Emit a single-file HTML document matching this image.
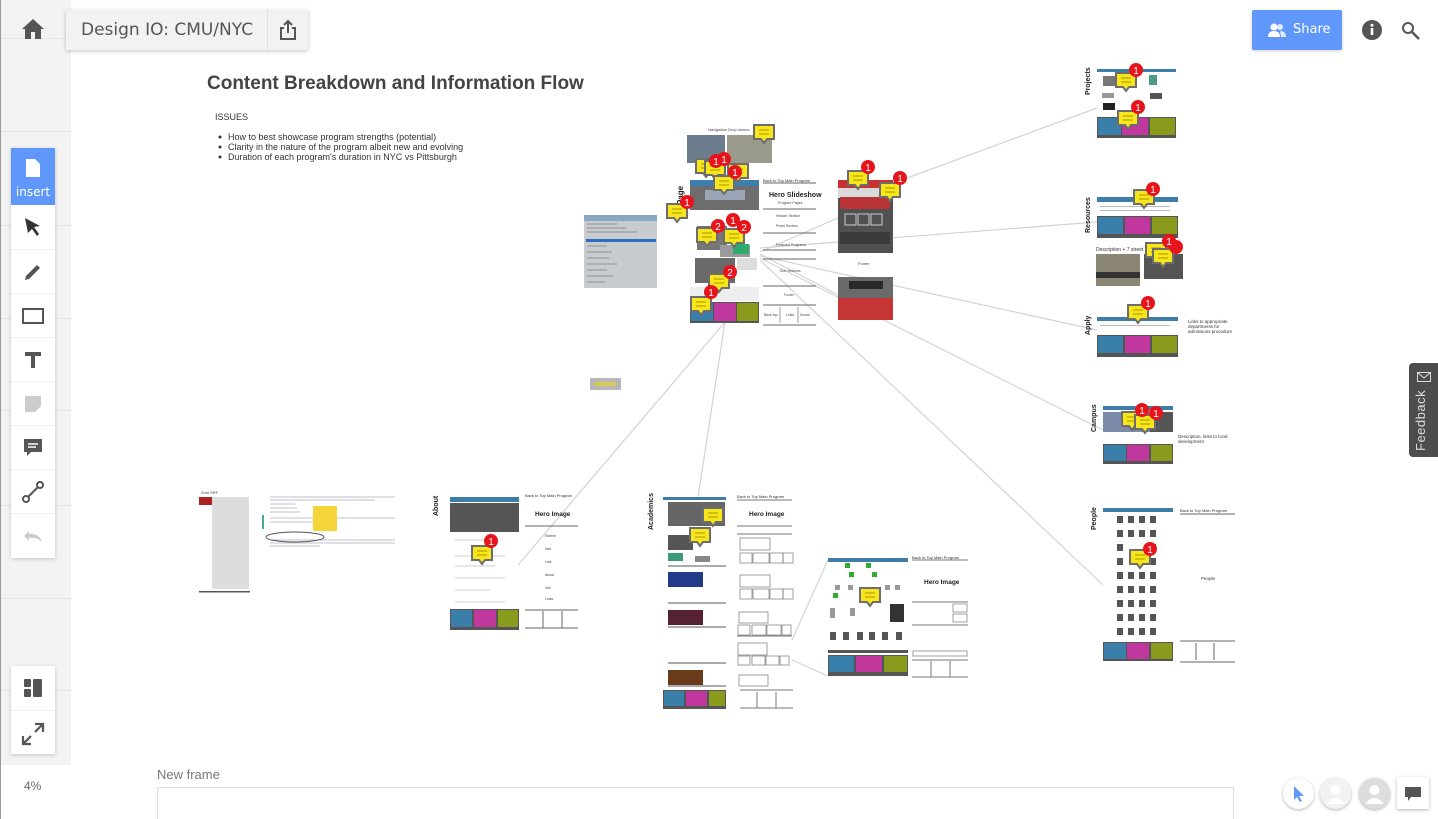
<!DOCTYPE html>
<html><head><meta charset="utf-8">
<style>
*{margin:0;padding:0;box-sizing:border-box}
body{width:1438px;height:819px;overflow:hidden;background:#fff;font-family:"Liberation Sans",sans-serif;position:relative}
.strip{position:absolute;left:0;top:0;width:71px;height:765px;background:#f3f3f3;border-left:1px solid #999}
.strip i{position:absolute;left:0;width:71px;height:1px;background:#e4e4e4}
.topbtn{position:absolute;left:66px;top:10px;width:242px;height:40px;background:#f2f2f2;box-shadow:0 1px 4px rgba(0,0,0,.25);border-radius:2px}
.topbtn span{position:absolute;left:15px;top:10px;color:#555;font-family:"DejaVu Sans","Liberation Sans",sans-serif;font-size:17px}
.topbtn b{position:absolute;left:201px;top:0;width:1px;height:40px;background:#ddd}
.tools{position:absolute;left:11px;top:148px;width:44px;height:410px;background:#fff;box-shadow:0 1px 4px rgba(0,0,0,.2)}
.ins{position:absolute;left:0;top:0;width:44px;height:57px;background:#5f97fb;color:#fff;font-size:13px;text-align:center}
.tool{position:absolute;left:0;width:44px;height:44px;display:flex;align-items:center;justify-content:center;border-top:1px solid #eee}
.share{position:absolute;left:1252px;top:10px;width:90px;height:40px;background:#5f97fb;border-radius:2px;color:#fff;font-size:14px;box-shadow:0 1px 3px rgba(0,0,0,.2)}
.fb{position:absolute;left:1409px;top:363px;width:29px;height:94px;background:#4d4d4d;border-radius:4px 0 0 4px}
.fb span{position:absolute;left:4px;top:88px;transform:rotate(-90deg);transform-origin:0 0;color:#ddd;font-size:13px;white-space:nowrap;letter-spacing:.5px}
.circ{position:absolute;top:778px;width:31px;height:31px;border-radius:50%;background:#fff;box-shadow:0 1px 3px rgba(0,0,0,.3)}
</style></head><body>
<div class="strip"><i style="top:38px"></i><i style="top:131px"></i><i style="top:225px"></i><i style="top:318px"></i><i style="top:410px"></i><i style="top:505px"></i><i style="top:598px"></i><i style="top:690px"></i></div>
<div style="position:absolute;left:0;top:765px;width:71px;height:54px;background:#fff;border-left:1px solid #999"></div>
<svg style="position:absolute;left:21px;top:18px" width="24" height="22" viewBox="0 0 24 22"><path d="M12 1 L1 11 H4 V21 H10 V14 H14 V21 H20 V11 H23 Z" fill="#555"/></svg>
<div class="topbtn"><span>Design IO: CMU/NYC</span><b></b>
<svg style="position:absolute;left:212px;top:9px" width="20" height="22" viewBox="0 0 20 22"><path d="M10 2 V14 M6 6 L10 2 L14 6 M6 9 H3 V20 H17 V9 H14" stroke="#555" stroke-width="2" fill="none"/></svg></div>

<div class="tools">
<div class="ins"><svg style="position:absolute;left:15px;top:11px" width="14" height="18" viewBox="0 0 14 18"><path d="M0 0 H9 L14 5 V18 H0 Z" fill="#fff"/></svg><div style="position:absolute;top:37px;width:44px;font-family:'DejaVu Sans',sans-serif;font-size:12px">insert</div></div>
<div class="tool" style="top:57px;border:none"><svg width="20" height="20" viewBox="0 0 20 20"><path d="M2 1 L17 9 L11 10 L16 17 L14 19 L9 12 L5 16 Z" fill="#333"/></svg></div>
<div class="tool" style="top:101px"><svg width="20" height="20" viewBox="0 0 20 20"><path d="M2 18 L3 14 L14 3 L17 6 L6 17 Z" fill="#555"/></svg></div>
<div class="tool" style="top:145px"><svg width="22" height="16"><rect x="1" y="1" width="20" height="14" fill="none" stroke="#555" stroke-width="2"/></svg></div>
<div class="tool" style="top:189px"><svg width="18" height="18"><path d="M1 1 H17 V5 H11 V17 H7 V5 H1Z" fill="#555"/></svg></div>
<div class="tool" style="top:233px"><svg width="18" height="18"><path d="M1 1 H17 V11 L11 17 H1Z" fill="#ccc"/></svg></div>
<div class="tool" style="top:277px"><svg width="20" height="20"><path d="M1 1 H19 V14 H8 L4 18 V14 H1Z" fill="#555"/><path d="M5 6 H15 M5 9 H13" stroke="#fff" stroke-width="1.5"/></svg></div>
<div class="tool" style="top:321px"><svg width="22" height="22"><circle cx="4" cy="18" r="3" fill="none" stroke="#555" stroke-width="2"/><circle cx="18" cy="4" r="3" fill="none" stroke="#555" stroke-width="2"/><path d="M6 16 L16 6" stroke="#555" stroke-width="2"/></svg></div>
<div class="tool" style="top:365px"><svg width="22" height="16"><path d="M2 8 L7 3 V6 Q17 5 20 14 Q15 9 7 10 V13Z" fill="#ccc"/></svg></div>
</div>

<div style="position:absolute;left:11px;top:666px;width:44px;height:88px;background:#fff;box-shadow:0 1px 4px rgba(0,0,0,.2)">
<svg style="position:absolute;left:13px;top:13px" width="18" height="18"><rect x="0" y="0" width="7" height="8" rx="1" fill="#555"/><rect x="0" y="10" width="7" height="8" rx="1" fill="#555"/><rect x="9" y="0" width="9" height="18" rx="1" fill="#555"/></svg>
<div style="position:absolute;left:0;top:44px;width:44px;height:1px;background:#eee"></div>
<svg style="position:absolute;left:10px;top:56px" width="24" height="24"><path d="M14 2 H22 V10 M22 2 L14 10 M10 22 H2 V14 M2 22 L10 14" stroke="#555" stroke-width="2.2" fill="none"/></svg>
</div>
<div style="position:absolute;left:24px;top:779px;font-size:12px;color:#666">4%</div>

<div class="share"><svg style="position:absolute;left:16px;top:13px" width="18" height="14"><circle cx="6" cy="4" r="3.5" fill="#fff"/><path d="M0 14 Q0 8 6 8 Q12 8 12 14Z" fill="#fff"/><circle cx="12" cy="4" r="3" fill="#fff" opacity=".8"/><path d="M12 8 Q18 8 18 14 H13" fill="#fff" opacity=".8"/></svg><span style="position:absolute;left:41px;top:12px;font-family:'DejaVu Sans',sans-serif;font-size:13px">Share</span></div>
<svg style="position:absolute;left:1362px;top:20px" width="20" height="20"><circle cx="10" cy="10" r="10" fill="#555"/><rect x="8.7" y="8" width="2.6" height="7" fill="#fff"/><circle cx="10" cy="5.3" r="1.5" fill="#fff"/></svg>
<svg style="position:absolute;left:1401px;top:21px" width="20" height="20"><circle cx="7" cy="7" r="5" fill="none" stroke="#555" stroke-width="2"/><path d="M11 11 L18 18" stroke="#555" stroke-width="2.5"/></svg>

<div class="fb"><svg style="position:absolute;left:8px;top:9px" width="14" height="10"><rect x=".5" y=".5" width="13" height="9" fill="none" stroke="#ddd"/><path d="M.5 .5 L7 6 L13.5 .5" fill="none" stroke="#ddd"/></svg><span>Feedback</span></div>

<svg style="position:absolute;left:0;top:0" width="1438" height="819">
<defs>
<g id="nt"><path d="M1 1 H21 V15 H14 L11 19 L8 15 H1Z" fill="#f7e61c" stroke="#6d6d6d" stroke-width="2"/><path d="M6 6 H16 M6 10 H16" stroke="#b9a800" stroke-width="1.3"/></g>
</defs>
<g font-family="Liberation Sans,sans-serif">
<text x="207" y="89" font-size="19" font-weight="bold" fill="#444">Content Breakdown and Information Flow</text>
<text x="215" y="120" font-size="9" fill="#333">ISSUES</text>
<g font-size="9" fill="#333"><circle cx="220" cy="137" r="1.5"/><text x="228" y="140">How to best showcase program strengths (potential)</text>
<circle cx="220" cy="147" r="1.5"/><text x="228" y="150">Clarity in the nature of the program albeit new and evolving</text>
<circle cx="220" cy="157" r="1.5"/><text x="228" y="160">Duration of each program's duration in NYC vs Pittsburgh</text></g>

<g stroke="#d3d3d3" stroke-width="1.2" fill="none">
<path d="M760 252 L838 218"/><path d="M880 188 L1097 108"/><path d="M760 248 L1097 222"/><path d="M760 256 L1097 330"/><path d="M760 258 L1103 430"/><path d="M760 260 L1103 585"/><path d="M725 322 L518 565"/><path d="M725 322 L698 497"/><path d="M760 254 L838 295"/><path d="M792 640 L828 560"/><path d="M792 660 L828 676"/>
</g>

<rect x="584" y="215" width="73" height="73" fill="#c9cccf"/>
<rect x="584" y="215" width="73" height="6" fill="#8aa7c2"/><rect x="586" y="239" width="70" height="3" fill="#2b6fc5"/>
<g stroke="#555" stroke-width=".6"><path d="M587 224h30M587 228h40M587 232h50M587 246h20M587 252h25M587 258h22M587 264h30M587 270h20M587 276h26M587 282h18"/></g>
<rect x="590" y="378" width="31" height="12" fill="#b8b8b8"/><rect x="594" y="382" width="22" height="4" fill="#d8c85a"/>

<text x="708" y="131" font-size="4" fill="#444">Navigation Drop downs</text>
<rect x="687" y="135" width="38" height="28" fill="#6b7d8c"/><rect x="727" y="135" width="45" height="28" fill="#9a9a8c"/>
<rect x="690" y="180" width="69" height="30" fill="#6d6d6d"/><rect x="690" y="180" width="69" height="6" fill="#3c7fae"/><rect x="705" y="190" width="40" height="10" fill="#9aa5b8"/>
<text x="683" y="205" font-size="8" font-weight="bold" fill="#222" transform="rotate(-90 683 205)">Page</text>
<rect x="697" y="226" width="30" height="24" fill="#777"/><rect x="720" y="245" width="30" height="12" fill="#9a9a9a"/><rect x="733" y="244" width="16" height="10" fill="#2eaa70"/>
<rect x="695" y="258" width="40" height="25" fill="#6a6a6a"/><rect x="737" y="258" width="20" height="12" fill="#ddd"/>
<rect x="690" y="287" width="69" height="14" fill="#eee"/>
<rect x="690" y="302" width="69" height="21" fill="#555"/><rect x="691" y="303" width="22" height="18" fill="#3a7eaa"/><rect x="714" y="303" width="22" height="18" fill="#c0389e"/><rect x="737" y="303" width="21" height="18" fill="#8a9a1d"/>
<g stroke="#666" stroke-width="1"><path d="M763 183h53M763 209h53M763 233h53M763 250h53M763 259h53M763 286h53M763 305h53M763 325h53"/></g>
<text x="763" y="182" font-size="4" fill="#333">Back to Top     Main Program</text>
<text x="769" y="197" font-size="7" font-weight="bold" fill="#222">Hero Slideshow</text>
<g font-size="3.5" fill="#444"><text x="778" y="204">Program Pages</text><text x="776" y="217">Header Section</text><text x="776" y="227">Press Section</text><text x="776" y="246">Featured Programs</text><text x="780" y="272">Sub Sections</text><text x="784" y="296">Footer</text><text x="764" y="316">Back top</text><text x="786" y="316">Links</text><text x="800" y="316">Social</text></g>
<g stroke="#999"><path d="M780 307v16M798 307v16"/></g>

<rect x="838" y="180" width="55" height="73" fill="#505050"/><rect x="838" y="180" width="55" height="8" fill="#c93030"/><rect x="838" y="188" width="55" height="10" fill="#d9d9d9"/><rect x="840" y="197" width="50" height="12" fill="#b83333"/>
<g fill="none" stroke="#ccc"><rect x="845" y="214" width="11" height="11"/><rect x="858" y="214" width="11" height="11"/><rect x="871" y="214" width="11" height="11"/></g>
<rect x="840" y="232" width="50" height="12" fill="#3a3a3a"/>
<text x="858" y="265" font-size="4" fill="#444">Footer</text>
<rect x="838" y="277" width="55" height="43" fill="#6a6a6a"/><rect x="849" y="281" width="34" height="8" fill="#2a2a2a"/><rect x="838" y="298" width="55" height="22" fill="#c63535"/>

<text x="1090" y="95" font-size="7" font-weight="bold" fill="#222" transform="rotate(-90 1090 95)">Projects</text>
<rect x="1097" y="69" width="79" height="3" fill="#3d7ea8"/>
<rect x="1103" y="76" width="14" height="10" fill="#777"/><rect x="1149" y="75" width="8" height="10" fill="#4a9a8a"/><rect x="1150" y="93" width="12" height="6" fill="#555"/><rect x="1103" y="103" width="12" height="7" fill="#222"/><rect x="1102" y="93" width="12" height="5" fill="#999"/>
<rect x="1097" y="117" width="79" height="21" fill="#555"/><rect x="1098" y="118" width="23" height="17" fill="#3a7eaa"/><rect x="1122" y="118" width="26" height="17" fill="#c0389e"/><rect x="1150" y="118" width="25" height="17" fill="#8a9a1d"/>

<text x="1090" y="233" font-size="7" font-weight="bold" fill="#222" transform="rotate(-90 1090 233)">Resources</text>
<rect x="1097" y="197" width="81" height="5" fill="#3d7ea8"/><rect x="1100" y="206" width="70" height="1" fill="#bbb"/><rect x="1100" y="210" width="70" height="1" fill="#bbb"/>
<rect x="1097" y="216" width="81" height="22" fill="#555"/><rect x="1098" y="217" width="25" height="17" fill="#3a7eaa"/><rect x="1125" y="217" width="25" height="17" fill="#c0389e"/><rect x="1152" y="217" width="25" height="17" fill="#8a9a1d"/>
<text x="1096" y="251" font-size="5" fill="#333">Description + 7 street list</text>
<rect x="1096" y="254" width="44" height="32" fill="#8b8574"/><rect x="1096" y="272" width="44" height="6" fill="#333"/><rect x="1144" y="254" width="39" height="25" fill="#555"/>

<text x="1090" y="335" font-size="7" font-weight="bold" fill="#222" transform="rotate(-90 1090 335)">Apply</text>
<rect x="1097" y="317" width="81" height="4" fill="#3d7ea8"/><rect x="1100" y="325" width="70" height="1" fill="#bbb"/>
<rect x="1097" y="335" width="81" height="22" fill="#555"/><rect x="1098" y="336" width="25" height="17" fill="#3a7eaa"/><rect x="1125" y="336" width="25" height="17" fill="#c0389e"/><rect x="1152" y="336" width="25" height="17" fill="#8a9a1d"/>
<g font-size="4.5" fill="#333"><text x="1188" y="323">Links to appropriate</text><text x="1188" y="328">departments for</text><text x="1188" y="333">admissions procedure</text></g>

<text x="1096" y="432" font-size="7" font-weight="bold" fill="#222" transform="rotate(-90 1096 432)">Campus</text>
<rect x="1103" y="406" width="70" height="4" fill="#3d7ea8"/><rect x="1103" y="412" width="70" height="20" fill="#7a8aa8"/><rect x="1150" y="412" width="23" height="20" fill="#555"/>
<rect x="1103" y="444" width="70" height="20" fill="#555"/><rect x="1104" y="445" width="22" height="16" fill="#3a7eaa"/><rect x="1127" y="445" width="22" height="16" fill="#c0389e"/><rect x="1151" y="445" width="21" height="16" fill="#8a9a1d"/>
<g font-size="4.5" fill="#333"><text x="1178" y="438">Description, links to local</text><text x="1178" y="443">development</text></g>

<text x="1096" y="530" font-size="7" font-weight="bold" fill="#222" transform="rotate(-90 1096 530)">People</text>
<rect x="1103" y="508" width="70" height="4" fill="#3d7ea8"/>
<g fill="#555">
<rect x="1117" y="516" width="6" height="7"/><rect x="1128" y="516" width="6" height="7"/><rect x="1139" y="516" width="6" height="7"/><rect x="1150" y="516" width="6" height="7"/>
<rect x="1117" y="530" width="6" height="7"/><rect x="1128" y="530" width="6" height="7"/><rect x="1139" y="530" width="6" height="7"/><rect x="1150" y="530" width="6" height="7"/>
<rect x="1117" y="544" width="6" height="7"/><rect x="1150" y="544" width="6" height="7"/>
<rect x="1117" y="558" width="6" height="7"/><rect x="1150" y="558" width="6" height="7"/>
<rect x="1117" y="572" width="6" height="7"/><rect x="1128" y="572" width="6" height="7"/><rect x="1139" y="572" width="6" height="7"/><rect x="1150" y="572" width="6" height="7"/>
<rect x="1117" y="586" width="6" height="7"/><rect x="1128" y="586" width="6" height="7"/><rect x="1139" y="586" width="6" height="7"/><rect x="1150" y="586" width="6" height="7"/>
<rect x="1117" y="600" width="6" height="7"/><rect x="1128" y="600" width="6" height="7"/><rect x="1139" y="600" width="6" height="7"/><rect x="1150" y="600" width="6" height="7"/>
<rect x="1117" y="614" width="6" height="7"/><rect x="1128" y="614" width="6" height="7"/><rect x="1139" y="614" width="6" height="7"/><rect x="1150" y="614" width="6" height="7"/>
<rect x="1117" y="628" width="6" height="7"/><rect x="1128" y="628" width="6" height="7"/><rect x="1139" y="628" width="6" height="7"/><rect x="1150" y="628" width="6" height="7"/></g>
<rect x="1103" y="642" width="70" height="19" fill="#555"/><rect x="1104" y="643" width="22" height="16" fill="#3a7eaa"/><rect x="1127" y="643" width="22" height="16" fill="#c0389e"/><rect x="1151" y="643" width="21" height="16" fill="#8a9a1d"/>
<g stroke="#666"><path d="M1180 514h55M1180 641h55M1180 662h55M1196 643v17M1214 643v17"/></g>
<text x="1180" y="512" font-size="4" fill="#333">Back to Top     Main Program</text>
<text x="1201" y="580" font-size="4.5" fill="#333">People</text>

<text x="201" y="494" font-size="4" fill="#444">Zeta   SRF</text>
<rect x="199" y="497" width="13" height="8" fill="#a22"/><rect x="212" y="497" width="37" height="92" fill="#ddd"/><rect x="199" y="591" width="51" height="1.5" fill="#555"/>
<rect x="262" y="515" width="2" height="14" fill="#4a9"/>
<g stroke="#aab" stroke-width=".8"><path d="M270 497h125M270 500h105M270 504h25M270 508h27M270 512h30M270 518h125M270 522h60M270 540h125M270 543h125M270 546h50"/></g>
<rect x="313" y="506" width="24" height="25" fill="#f5d63a"/>
<ellipse cx="295" cy="537" rx="29" ry="5" fill="none" stroke="#555"/>

<text x="438" y="516" font-size="7" font-weight="bold" fill="#222" transform="rotate(-90 438 516)">About</text>
<rect x="450" y="497" width="69" height="5" fill="#3d7ea8"/><rect x="450" y="503" width="69" height="29" fill="#555"/>
<g stroke="#ccc" stroke-width="1"><path d="M455 540h30M455 556h50M455 566h40M455 578h50M455 590h35M455 602h50"/></g>
<rect x="450" y="609" width="69" height="21" fill="#555"/><rect x="451" y="610" width="21" height="17" fill="#3a7eaa"/><rect x="474" y="610" width="22" height="17" fill="#c0389e"/><rect x="498" y="610" width="20" height="17" fill="#8a9a1d"/>
<g stroke="#666"><path d="M525 526h53M525 610h53M525 628h53M543 611v17M562 611v17"/></g>
<text x="525" y="497" font-size="4" fill="#333">Back to Top     Main Program</text>
<text x="535" y="516" font-size="6.5" font-weight="bold" fill="#222">Hero Image</text>
<g font-size="3.5" fill="#444"><text x="545" y="537">Stories</text><text x="545" y="550">Nav</text><text x="545" y="563">Link</text><text x="545" y="576">About</text><text x="545" y="589">Info</text><text x="545" y="600">Links</text></g>

<text x="653" y="530" font-size="7" font-weight="bold" fill="#222" transform="rotate(-90 653 530)">Academics</text>
<rect x="663" y="497" width="63" height="3" fill="#3d7ea8"/><rect x="668" y="502" width="57" height="24" fill="#666"/><rect x="668" y="535" width="25" height="15" fill="#555"/><rect x="668" y="553" width="15" height="8" fill="#3a9a7a"/><rect x="695" y="556" width="15" height="6" fill="#888"/>
<rect x="668" y="572" width="35" height="15" fill="#223a8a"/><rect x="668" y="610" width="35" height="15" fill="#552233"/><rect x="668" y="670" width="35" height="15" fill="#6a3a1a"/>
<g stroke="#777" stroke-width="1.2"><path d="M668 566h58M668 603h58M668 627h58M668 663h58M668 686h58"/></g>
<rect x="663" y="690" width="63" height="19" fill="#555"/><rect x="664" y="691" width="20" height="15" fill="#3a7eaa"/><rect x="686" y="691" width="21" height="15" fill="#c0389e"/><rect x="709" y="691" width="16" height="15" fill="#8a9a1d"/>
<g stroke="#777"><path d="M737 500h55M737 526h55M737 534h55M737 636h55M740 690h53M740 708h53M757 692v16M776 692v16"/></g>
<text x="737" y="498" font-size="4" fill="#333">Back to Top     Main Program</text>
<text x="749" y="516" font-size="6.5" font-weight="bold" fill="#222">Hero Image</text>
<g fill="none" stroke="#777" stroke-width=".7"><rect x="740" y="538" width="30" height="12"/><rect x="740" y="553" width="12" height="10"/><rect x="753" y="553" width="16" height="10"/><rect x="770" y="553" width="13" height="10"/><rect x="783" y="553" width="10" height="10"/>
<rect x="740" y="575" width="30" height="12"/><rect x="740" y="589" width="12" height="10"/><rect x="753" y="589" width="16" height="10"/><rect x="770" y="589" width="13" height="10"/><rect x="783" y="589" width="10" height="10"/>
<rect x="739" y="612" width="29" height="11"/><rect x="738" y="625" width="12" height="10"/><rect x="752" y="625" width="14" height="10"/><rect x="767" y="625" width="14" height="10"/><rect x="782" y="625" width="9" height="10"/>
<rect x="738" y="643" width="29" height="12"/><rect x="738" y="656" width="12" height="9"/><rect x="752" y="656" width="13" height="9"/><rect x="766" y="656" width="13" height="9"/><rect x="780" y="656" width="9" height="9"/><rect x="739" y="675" width="29" height="11"/></g>

<rect x="828" y="558" width="80" height="4" fill="#3d7ea8"/>
<g fill="#3a3"><rect x="845" y="563" width="5" height="5"/><rect x="866" y="563" width="5" height="5"/><rect x="849" y="572" width="5" height="5"/><rect x="872" y="572" width="5" height="5"/><rect x="833" y="593" width="5" height="5"/></g>
<g fill="#999"><rect x="835" y="585" width="5" height="5"/><rect x="848" y="585" width="5" height="5"/><rect x="885" y="585" width="5" height="5"/><rect x="895" y="585" width="5" height="5"/><rect x="830" y="608" width="5" height="10"/><rect x="850" y="608" width="5" height="8"/></g>
<rect x="890" y="604" width="14" height="18" fill="#333"/>
<g fill="#555"><rect x="830" y="632" width="6" height="8"/><rect x="843" y="632" width="6" height="8"/><rect x="857" y="632" width="6" height="8"/><rect x="869" y="632" width="6" height="8"/><rect x="882" y="632" width="6" height="8"/><rect x="896" y="632" width="6" height="8"/></g>
<rect x="828" y="650" width="80" height="3" fill="#555"/>
<rect x="828" y="655" width="80" height="21" fill="#555"/><rect x="829" y="656" width="25" height="16" fill="#3a7eaa"/><rect x="856" y="656" width="26" height="16" fill="#c0389e"/><rect x="884" y="656" width="23" height="16" fill="#8a9a1d"/>
<g stroke="#777"><path d="M912 560h56M912 602h56M912 625h56M912 660h56M912 677h56M931 661v16M950 661v16"/></g>
<rect x="913" y="651" width="54" height="5" fill="none" stroke="#777" stroke-width=".7"/>
<rect x="953" y="604" width="14" height="8" fill="none" stroke="#777" stroke-width=".7"/><rect x="953" y="614" width="14" height="8" fill="none" stroke="#777" stroke-width=".7"/>
<text x="912" y="559" font-size="4" fill="#333">Back to Top     Main Program</text>
<text x="924" y="584" font-size="6.5" font-weight="bold" fill="#222">Hero Image</text>

<use href="#nt" x="753" y="124"/><use href="#nt" x="695" y="158"/><use href="#nt" x="704" y="160"/><use href="#nt" x="727" y="163"/><use href="#nt" x="713" y="175"/><use href="#nt" x="666" y="203"/><use href="#nt" x="696" y="227"/><use href="#nt" x="723" y="228"/><use href="#nt" x="708" y="273"/><use href="#nt" x="690" y="296"/>
<use href="#nt" x="847" y="170"/><use href="#nt" x="879" y="182"/>
<use href="#nt" x="1115" y="72"/><use href="#nt" x="1117" y="110"/><use href="#nt" x="1133" y="189"/><use href="#nt" x="1145" y="242"/><use href="#nt" x="1152" y="248"/><use href="#nt" x="1127" y="304"/><use href="#nt" x="1121" y="411"/><use href="#nt" x="1134" y="414"/><use href="#nt" x="1129" y="549"/>
<use href="#nt" x="471" y="545"/><use href="#nt" x="702" y="507"/><use href="#nt" x="689" y="527"/><use href="#nt" x="859" y="587"/>

<g fill="#e8141b"><circle cx="716" cy="161" r="7"/><circle cx="724" cy="159" r="7"/><circle cx="735" cy="172" r="7"/><circle cx="687" cy="202" r="7"/><circle cx="718" cy="226" r="7"/><circle cx="733" cy="220" r="7"/><circle cx="744" cy="227" r="7"/><circle cx="730" cy="272" r="7"/><circle cx="711" cy="292" r="7"/><circle cx="868" cy="167" r="7"/><circle cx="900" cy="178" r="7"/><circle cx="1136" cy="70" r="7"/><circle cx="1138" cy="107" r="7"/><circle cx="1153" cy="189" r="7"/><circle cx="1169" cy="241" r="7"/><circle cx="1176" cy="247" r="7"/><circle cx="1148" cy="303" r="7"/><circle cx="1142" cy="410" r="7"/><circle cx="1156" cy="413" r="7"/><circle cx="1150" cy="549" r="7"/><circle cx="491" cy="541" r="7"/></g>
<g fill="#fff" font-size="10" text-anchor="middle"><text x="716" y="165">1</text><text x="724" y="163">1</text><text x="735" y="176">1</text><text x="687" y="206">1</text><text x="718" y="230">2</text><text x="733" y="224">1</text><text x="744" y="231">2</text><text x="730" y="276">2</text><text x="711" y="296">1</text><text x="868" y="171">1</text><text x="900" y="182">1</text><text x="1136" y="74">1</text><text x="1138" y="111">1</text><text x="1153" y="193">1</text><text x="1169" y="245">1</text><text x="1142" y="414">1</text><text x="1156" y="417">1</text><text x="1150" y="553">1</text><text x="491" y="545">1</text><text x="1148" y="307">1</text></g>

<text x="157" y="779" font-size="13" fill="#777">New frame</text>
<rect x="157.5" y="787.5" width="1076" height="40" fill="#fff" stroke="#ddd"/>
</g>
</svg>

<div class="circ" style="left:1283px"><svg style="position:absolute;left:10px;top:7px" width="12" height="17"><path d="M1 1 L11 11 H6 L9 16 L7 17 L4 12 L1 15Z" fill="#5f97fb"/></svg></div>
<div class="circ" style="left:1320px;background:#f2f2f2"><svg width="31" height="31"><circle cx="15.5" cy="12" r="5" fill="#fff"/><path d="M6 26 Q15.5 14 25 26Z" fill="#fff"/></svg></div>
<div class="circ" style="left:1359px;background:#ddd"><svg width="31" height="31"><circle cx="15.5" cy="12" r="5" fill="#fff"/><path d="M6 26 Q15.5 14 25 26Z" fill="#fff"/></svg></div>
<div style="position:absolute;left:1397px;top:777px;width:32px;height:32px;background:#fff;box-shadow:0 1px 3px rgba(0,0,0,.3)"><svg style="position:absolute;left:7px;top:9px" width="18" height="16"><path d="M1 1 H17 V11 H7 L4 15 V11 H1Z" fill="#555"/></svg></div>
</body></html>
